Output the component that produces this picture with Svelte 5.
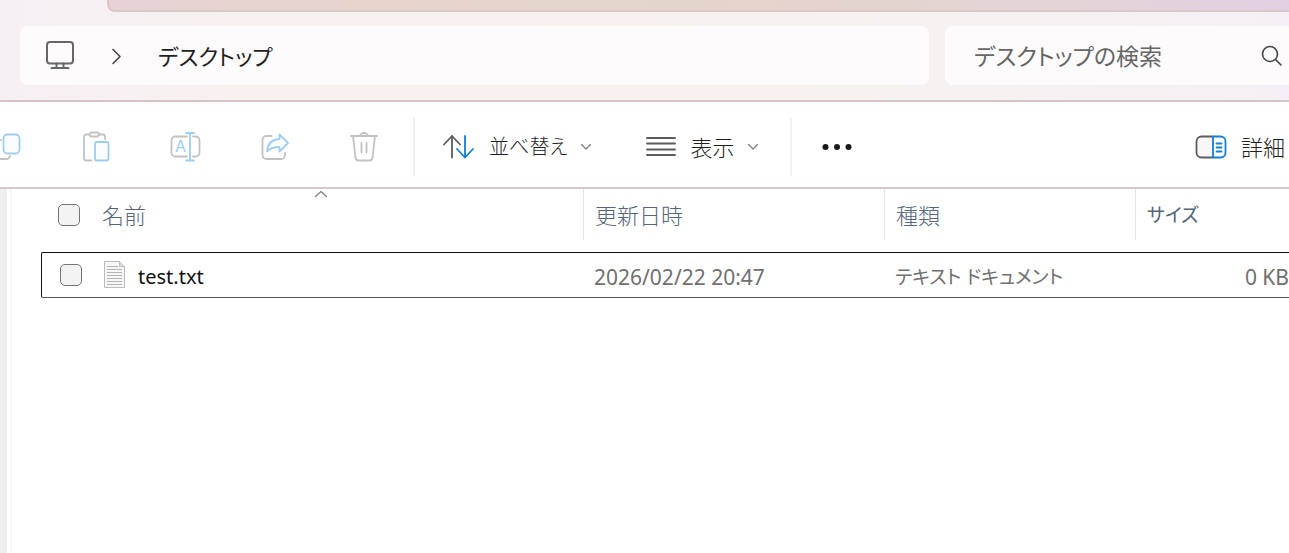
<script>
  const columns = [
    { key: "modified", label: "更新日時" },
    { key: "type", label: "種類" },
    { key: "size", label: "サイズ" },
  ];

  let files = [
    { name: "test.txt", modified: "2026/02/22 20:47", type: "テキスト ドキュメント", size: "0 KB", checked: false },
  ];

  let query = "";
  let ascending = true;

  $: allChecked = files.length > 0 && files.every((f) => f.checked);

  function toggleAll(e) {
    files = files.map((f) => ({ ...f, checked: e.target.checked }));
  }
</script>

<div class="explorer">
  <header class="titlebar">
    <div class="tabstrip"></div>
    <div class="address-row">
      <nav class="address">
        <button class="crumb-icon" aria-label="場所">
          <svg width="32" height="32" viewBox="0 0 32 32" class="line monitor">
            <rect x="3" y="2" width="26" height="21.500" rx="3" />
            <path d="M12.500 23.500v4M19.500 23.500v4M7.500 28h17" />
          </svg>
        </button>
        <svg class="line dark crumb-sep" width="16" height="20" viewBox="0 0 16 20">
          <path d="M5 3.500 12 10.500 5 17.500" />
        </svg>
        <a class="crumb" href="#desktop">デスクトップ</a>
      </nav>
      <div class="search">
        <input type="text" bind:value={query} placeholder="デスクトップの検索" aria-label="デスクトップの検索" />
        <button class="search-btn" aria-label="検索">
          <svg class="line dark" width="24" height="24" viewBox="0 0 24 24">
            <circle cx="10" cy="10" r="7.500" />
            <path d="M15.500 15.500 21 21" />
          </svg>
        </button>
      </div>
    </div>
  </header>

  <div class="toolbar">
    <div class="icon-group">
      <button class="tool first" disabled aria-label="コピー">
        <svg class="line" width="32" height="32" viewBox="0 0 32 32">
          <path class="g" d="M11 9H8v16a3 3 0 0 0 3 3h5a4 4 0 0 0 4-3" />
          <rect class="b" x="13.500" y="3.500" width="16" height="19" rx="4" />
        </svg>
      </button>
      <button class="tool" disabled aria-label="貼り付け">
        <svg class="line" width="32" height="32" viewBox="0 0 32 32">
          <path class="g" d="M10.500 29.500H5a2 2 0 0 1-2-2v-22a2 2 0 0 1 2-2h3M18 3.500h4a2 2 0 0 1 2 2V8" />
          <rect class="g" x="8.500" y="1.500" width="9.500" height="4" rx="2" />
          <rect class="b" x="14" y="11" width="13.500" height="18.500" rx="2" />
        </svg>
      </button>
      <button class="tool" disabled aria-label="名前の変更">
        <svg class="line" width="32" height="32" viewBox="0 0 32 32">
          <path class="g" d="M17 5.500H5.500a4 4 0 0 0-4 4v12a4 4 0 0 0 4 4H17M23 5.500h2.500a4 4 0 0 1 4 4v12a4 4 0 0 1-4 4H23" />
          <path class="b" d="M20 2v27.500M16 2h8M16 29.500h8" />
          <text class="letter" x="10.500" y="21" text-anchor="middle">A</text>
        </svg>
      </button>
      <button class="tool" disabled aria-label="共有">
        <svg class="line" width="32" height="32" viewBox="0 0 32 32">
          <path class="g" d="M12.500 5H7.500a4 4 0 0 0-4 4v15a4 4 0 0 0 4 4H22a4 4 0 0 0 4-4v-2" />
          <path class="b" d="M20.500 3.500 29 12l-8.500 8.500v-4.500C15 16 11 17 8 20.500 8.500 13 13 8.500 20.500 8z" />
        </svg>
      </button>
      <button class="tool" disabled aria-label="削除">
        <svg class="line" width="32" height="32" viewBox="0 0 32 32">
          <path class="g" d="M3 5h26M12 5a4 3 0 0 1 8 0M5 5l2.500 22a3 3 0 0 0 3 2.500h11a3 3 0 0 0 3-2.500L27 5M13.500 12v9.500M18.500 12v9.500" />
        </svg>
      </button>
    </div>

    <span class="divider"></span>

    <button class="menu" on:click={() => (ascending = !ascending)}>
      <svg class="line" width="32" height="32" viewBox="0 0 32 32">
        <path class="k" d="M9 26.500V5M1 13.500 9 5l8 8.500" />
        <path class="a" d="M22 5v21M14 18l8 8.500 8-8.500" />
      </svg>
      <span class="sort-label">並べ替え</span>
      <svg class="line chevron" width="12" height="8" viewBox="0 0 12 8"><path d="M1.500 1.500 6 6l4.500-4.500" /></svg>
    </button>

    <button class="menu view">
      <svg class="line" width="32" height="32" viewBox="0 0 32 32">
        <path class="k" d="M2 7h28M2 12.500h28M2 18.500h28M2 24h28" />
      </svg>
      <span>表示</span>
      <svg class="line chevron" width="12" height="8" viewBox="0 0 12 8"><path d="M1.500 1.500 6 6l4.500-4.500" /></svg>
    </button>

    <span class="divider"></span>

    <button class="more" aria-label="もっと見る">
      <svg width="32" height="8" viewBox="0 0 32 8" fill="#1a1a1a">
        <circle cx="4.500" cy="4" r="3" />
        <circle cx="16" cy="4" r="3" />
        <circle cx="27.500" cy="4" r="3" />
      </svg>
    </button>

    <button class="menu details">
      <svg class="line" width="32" height="32" viewBox="0 0 32 32">
        <path class="k pale" d="M17.500 5.500H6.500a5 5 0 0 0-5 5v11a5 5 0 0 0 5 5h11" />
        <path class="a" d="M18 5.500h7.500a5 5 0 0 1 5 5v11a5 5 0 0 1-5 5H18zM21.500 12.500h5M21.500 16.500h5M21.500 20.500h5" />
      </svg>
      <span>詳細</span>
    </button>
  </div>

  <div class="body">
    <aside class="nav-pane"></aside>
    <main>
      <table>
        <colgroup>
          <col />
          <col class="col-modified" />
          <col class="col-type" />
          <col class="col-size" />
        </colgroup>
        <thead>
          <tr>
            <th class="name">
              <div class="name-cell">
                <input type="checkbox" checked={allChecked} on:change={toggleAll} aria-label="すべて選択" />
                <span>名前</span>
              </div>
              <svg class="line sort-mark" class:desc={!ascending} width="14" height="8" viewBox="0 0 14 8">
                <path d="M1.500 6.500 7 1.500 12.500 6.500" />
              </svg>
            </th>
            {#each columns as col}
              <th class={col.key}>{col.label}</th>
            {/each}
          </tr>
        </thead>
        <tbody>
          {#each files as file}
            <tr>
              <td class="name">
                <div class="name-cell">
                  <input type="checkbox" bind:checked={file.checked} aria-label={file.name} />
                  <svg class="file-icon" width="22" height="28" viewBox="0 0 22 28">
                    <path d="M.5.5h15l5 5v21H.5z" fill="#f6f6f6" stroke="#bcbcbc" />
                    <path d="M15.500.5v5h5" fill="#dcdcdc" stroke="#bcbcbc" />
                    <path d="M3 5.500h11M3 8.500h15M3 11.500h15M3 14.500h15M3 17.500h15M3 20.500h15M3 23.500h15" stroke="#b4b4b4" />
                  </svg>
                  <span class="label">{file.name}</span>
                </div>
              </td>
              {#each columns as col}
                <td class={col.key}>{file[col.key]}</td>
              {/each}
            </tr>
          {/each}
        </tbody>
      </table>
    </main>
  </div>
</div>

<style>
  :global(body) {
    background: #fff;
  }
  .explorer {
    min-height: 100vh;
    display: flex;
    flex-direction: column;
    overflow: hidden;
    font-family: "Noto Sans", "Noto Sans CJK JP", sans-serif;
    font-size: 22px;
    line-height: 32px;
    font-feature-settings: "palt";
    color: #1f1f1f;
  }
  button {
    display: flex;
    align-items: center;
    padding: 0;
    border: 0;
    background: none;
    font: inherit;
    font-feature-settings: inherit;
    color: inherit;
  }
  svg {
    display: block;
    flex: none;
  }
  .line {
    fill: none;
    stroke-width: 1.8;
    stroke-linecap: round;
    stroke-linejoin: round;
  }
  .monitor {
    stroke: #666;
    stroke-width: 2;
  }
  .dark {
    stroke: #444;
    stroke-width: 1.6;
  }
  .chevron,
  .sort-mark {
    stroke: #808080;
    stroke-width: 1.3;
  }
  .g {
    stroke: #c2c2c2;
    fill: #fafafa;
  }
  .b {
    stroke: #9dcdf2;
    fill: #fafcfe;
  }
  .k {
    stroke: #5c5c5c;
  }
  .a {
    stroke: #0f7fd8;
  }
  path.g,
  path.b {
    fill: none;
  }
  path.pale {
    fill: #f7f7f7;
  }
  .letter {
    font-family: Inter, sans-serif;
    font-size: 16px;
    fill: #9dcdf2;
  }

  .titlebar {
    background: linear-gradient(90deg, #f6f0f5 0%, #f7f2f0 18%, #f7f2ee 50%, #f6f2f1 75%, #f5f0f5 100%);
    border-bottom: 2px solid #d4c4c8;
  }
  .tabstrip {
    height: 10px;
    margin-left: 107px;
    border: solid #dcc8ca;
    border-width: 0 0 2px 2px;
    border-bottom-left-radius: 8px;
    background: linear-gradient(90deg, #e7d2d5 0%, #e8d4cb 25%, #e4d6cb 38%, #e4d4cd 60%, #e4d4d6 80%, #e2d0e2 100%);
  }
  .address-row {
    display: flex;
    gap: 16px;
    padding: 14px 0 15px 20px;
  }
  .address,
  .search {
    display: flex;
    align-items: center;
    height: 59px;
    background: #fdfbfc;
    border-radius: 8px;
  }
  .address {
    flex: 1;
    padding-left: 24px;
  }
  .crumb-sep {
    margin-left: 32px;
  }
  .crumb {
    margin-left: 34px;
    color: #1f1f1f;
    text-decoration: none;
  }
  .search {
    width: 344px;
    border-radius: 8px 0 0 8px;
  }
  .search input {
    flex: 1;
    min-width: 0;
    padding: 0 0 0 29px;
    border: 0;
    outline: none;
    background: none;
    font: inherit;
    font-size: 23px;
    font-feature-settings: inherit;
    color: #1f1f1f;
  }
  .search input::placeholder {
    color: #666;
    opacity: 1;
  }
  .search-btn {
    padding-right: 5px;
  }

  .toolbar {
    display: flex;
    align-items: center;
    height: 81px;
    padding-top: 4px;
    border-bottom: 2px solid #d9c6cb;
  }
  .icon-group {
    display: flex;
    gap: 1px;
    margin-right: 5px;
  }
  .tool {
    width: 88px;
    justify-content: center;
  }
  .tool.first {
    width: 52px;
    justify-content: flex-end;
    padding-right: 30px;
  }
  .divider {
    width: 2px;
    height: 58px;
    background: #f0f0f0;
  }
  .menu {
    margin-left: 28px;
    font-weight: 300;
  }
  .menu span {
    margin-left: 14px;
  }
  .menu .sort-label {
    font-size: 20px;
  }
  .chevron {
    margin-left: 12px;
  }
  .view {
    margin-left: 53px;
    margin-right: 31px;
  }
  .more {
    margin-left: 29px;
  }
  .details {
    margin-left: auto;
    margin-right: 4px;
  }

  .body {
    flex: 1;
    display: flex;
  }
  .nav-pane {
    width: 7px;
    margin-right: 3px;
    background: #eee;
  }
  main {
    flex: 1;
    min-width: 0;
    padding-left: 29px;
    border-left: 2px solid #f7f7f7;
  }
  table {
    width: 100%;
    table-layout: fixed;
    border-spacing: 0;
  }
  .col-modified {
    width: 301px;
  }
  .col-type {
    width: 251px;
  }
  .col-size {
    width: 154px;
  }
  th,
  td {
    padding: 0 0 0 11px;
    text-align: left;
    font-weight: 400;
    white-space: nowrap;
  }
  th {
    position: relative;
    height: 51px;
    border-left: 1px solid #e5e5e5;
    font-weight: 300;
    color: #54657d;
  }
  th.name {
    border-left: 0;
    padding-left: 17px;
  }
  th.size {
    font-size: 19px;
    font-weight: 400;
  }
  tbody::before {
    content: "";
    display: block;
    height: 12px;
  }
  td {
    height: 40px;
    padding-top: 4px;
    border-top: 1px solid #111;
    border-bottom: 1px solid #555;
    font-size: 21px;
    color: #707070;
  }
  td.name {
    padding: 0 0 0 18px;
    border-left: 1px solid #111;
    border-radius: 2px 0 0 2px;
    font-size: 20px;
    color: #111;
  }
  td.type {
    font-size: 19px;
  }
  td.size {
    padding-left: 0;
    text-align: right;
  }
  .name-cell {
    display: flex;
    align-items: center;
  }
  .name-cell input {
    appearance: none;
    flex: none;
    width: 22px;
    height: 22px;
    margin: 0 22px 0 0;
    border: 1px solid #757575;
    border-radius: 5px;
    background: #f3f3f3;
  }
  .name-cell input:checked {
    background: #0f7fd8;
  }
  .file-icon {
    margin-right: 12px;
  }
  .label {
    padding-top: 4px;
  }
  .sort-mark {
    position: absolute;
    top: 1px;
    left: 273px;
  }
  .sort-mark.desc {
    transform: rotate(180deg);
  }
</style>
